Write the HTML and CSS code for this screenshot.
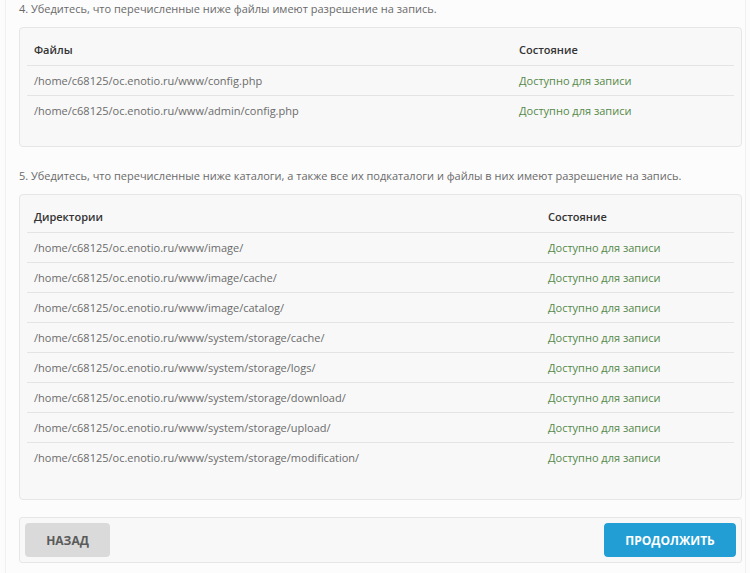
FILE: index.html
```html
<!DOCTYPE html>
<html lang="ru">
<head>
<meta charset="utf-8">
<link rel="stylesheet" href="styles.css">
</head>
<body>
<div class="wrap">
  <p class="note">4. Убедитесь, что перечисленные ниже файлы имеют разрешение на запись.</p>
  <div class="panel">
    <table class="tbl t1">
      <thead><tr><th class="c1">Файлы</th><th>Состояние</th></tr></thead>
      <tbody>
        <tr><td>/home/c68125/oc.enotio.ru/www/config.php</td><td class="ok">Доступно для записи</td></tr>
        <tr><td>/home/c68125/oc.enotio.ru/www/admin/config.php</td><td class="ok">Доступно для записи</td></tr>
      </tbody>
    </table>
  </div>
  <p class="note">5. Убедитесь, что перечисленные ниже каталоги, а также все их подкаталоги и файлы в них имеют разрешение на запись.</p>
  <div class="panel">
    <table class="tbl t2">
      <thead><tr><th class="c1">Директории</th><th>Состояние</th></tr></thead>
      <tbody>
        <tr><td>/home/c68125/oc.enotio.ru/www/image/</td><td class="ok">Доступно для записи</td></tr>
        <tr><td>/home/c68125/oc.enotio.ru/www/image/cache/</td><td class="ok">Доступно для записи</td></tr>
        <tr><td>/home/c68125/oc.enotio.ru/www/image/catalog/</td><td class="ok">Доступно для записи</td></tr>
        <tr><td>/home/c68125/oc.enotio.ru/www/system/storage/cache/</td><td class="ok">Доступно для записи</td></tr>
        <tr><td>/home/c68125/oc.enotio.ru/www/system/storage/logs/</td><td class="ok">Доступно для записи</td></tr>
        <tr><td>/home/c68125/oc.enotio.ru/www/system/storage/download/</td><td class="ok">Доступно для записи</td></tr>
        <tr><td>/home/c68125/oc.enotio.ru/www/system/storage/upload/</td><td class="ok">Доступно для записи</td></tr>
        <tr><td>/home/c68125/oc.enotio.ru/www/system/storage/modification/</td><td class="ok">Доступно для записи</td></tr>
      </tbody>
    </table>
  </div>
  <div class="footer">
    <button class="btn back">НАЗАД</button>
    <button class="btn next">ПРОДОЛЖИТЬ</button>
  </div>
</div>
</body>
</html>
```

FILE: styles.css
```css
html, body {
  margin: 0;
  padding: 0;
  background: #fcfcfc;
}
body {
  font-family: "Open Sans", "Liberation Sans", sans-serif;
  font-size: 11px;
  color: #666;
}
.wrap {
  margin: 0 4px 0 5px;
  border-left: 1px solid #f0f0f0;
  border-right: 1px solid #f0f0f0;
  padding: 0 3px 0 13px;
  min-height: 573px;
  box-sizing: border-box;
}
.note {
  margin: 0 0 9px;
  line-height: 18px;
  font-size: 11px;
  color: #6a6a6a;
}
.panel {
  background: #f8f8f8;
  border: 1px solid #e6e6e6;
  border-radius: 4px;
  padding: 7px 7px 0;
  margin-bottom: 20px;
}
.tbl {
  width: 100%;
  border-collapse: collapse;
  margin-bottom: 21px;
  font-size: 11px;
}
.t2 { margin-bottom: 27px; }
.tbl th, .tbl td {
  text-align: left;
  padding: 0 7px;
  height: 29px;
  line-height: 18px;
  vertical-align: middle;
}
.tbl th {
  height: 30px;
  font-weight: 600;
  color: #333;
}
.tbl td {
  border-top: 1px solid #e4e4e4;
  color: #6b6b6b;
}
.t1 .c1 { width: 471px; }
.t2 .c1 { width: 500px; }
.tbl td.ok {
  color: #55894a;
}
.footer {
  display: flex;
  justify-content: space-between;
  align-items: center;
  background: #f8f8f8;
  border: 1px solid #e6e6e6;
  border-radius: 3px;
  padding: 5px 5px;
  margin-top: -3px;
}
.btn {
  font-family: "Open Sans", "Liberation Sans", sans-serif;
  font-size: 12px;
  font-weight: 700;
  height: 34px;
  border: none;
  border-radius: 4px;
  padding: 0 21px;
}
.back {
  background: #dadada;
  color: #5a5a5a;
  width: 85px;
}
.next {
  background: #229ed4;
  color: #fff;
  width: 132px;
}
```
